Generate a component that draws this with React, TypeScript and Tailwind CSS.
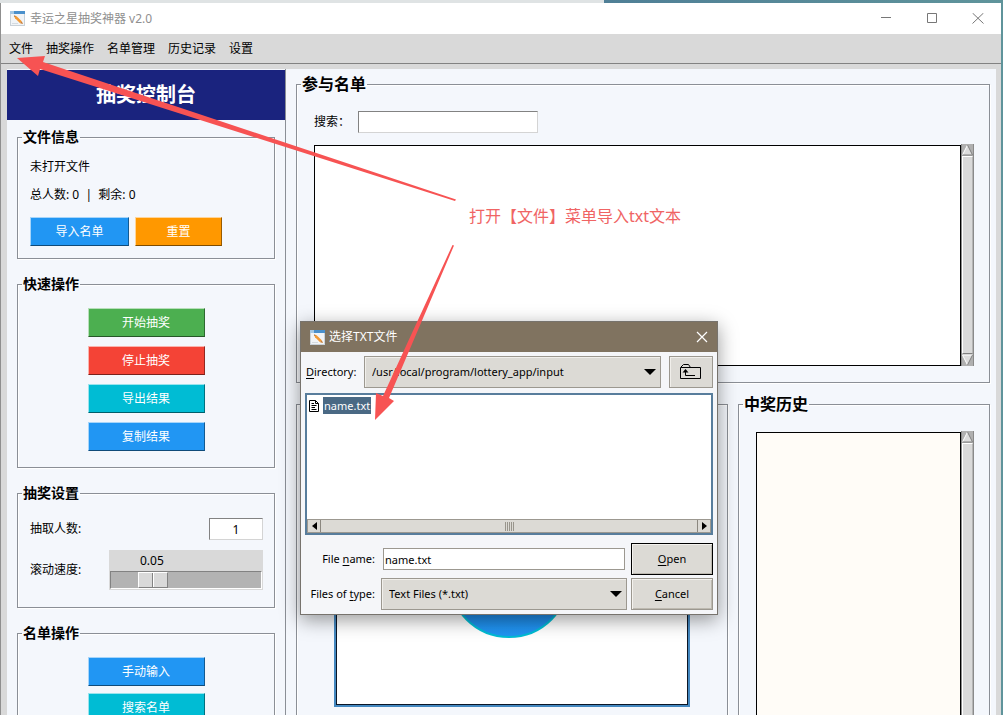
import { useState } from "react";
import type { ReactNode } from "react";

const NOTE_COLOR = "#f75353";

function AppIcon() {
  return (
    <svg width="15" height="15" viewBox="0 0 15 15" aria-hidden="true" className="shrink-0">
      <rect x="0.5" y="0.5" width="14" height="14" fill="#f1f4f7" stroke="#c9d1d8" />
      <rect x="0" y="0" width="15" height="3" fill="#4a90cc" />
      <rect x="0" y="0" width="4" height="3" fill="#a5c8e4" />
      <path d="M2 12.5h6" stroke="#d5dbe0" />
      <path d="M4 4.6l2.6.7 5.2 5-1.7 1.9L5 7.200z" fill="#f39a35" />
      <path d="M10.100 12.200l1.700-1.900 1.200 2.700z" fill="#c47a35" />
      <path d="M4 4.600l1.600.4-.9 1z" fill="#8a5a2c" />
    </svg>
  );
}

function Group({ title, large, className, children }: { title: string; large?: boolean; className: string; children: ReactNode }) {
  return (
    <fieldset className={"min-w-0 border border-[#8b8f96] shadow-[1px_1px_0_#fff,inset_1px_1px_0_#fff] " + className}>
      <legend className={"ml-1 h-5 px-px font-bold leading-5 " + (large ? "text-[16px]" : "text-[14px]")}>{title}</legend>
      {children}
    </fieldset>
  );
}

function ActionButton({ className, children }: { className: string; children: ReactNode }) {
  return (
    <button
      type="button"
      className={"h-[29px] border border-t-white/60 border-l-white/60 border-r-black/40 border-b-black/50 text-[12px] text-white " + className}
    >
      {children}
    </button>
  );
}

function ScrollBar({ bottom }: { bottom?: boolean }) {
  return (
    <div className="flex w-[13px] shrink-0 flex-col border-x border-[#8a8a8a] bg-[#c9c9c9]">
      <svg viewBox="0 0 11 12" className="h-3 w-full shrink-0 bg-[#b0b0b0]" aria-hidden="true">
        <path d="M5.5 1L10.5 11H0.5z" fill="#dcdcdc" />
        <path d="M5.5 1L0.5 11" stroke="#fff" />
        <path d="M5.5 1L10.5 11H0.5" stroke="#808080" fill="none" />
      </svg>
      <div className="min-h-0 flex-1 border border-t-white border-r-[#b5b5b5] border-b-[#808080] border-l-white bg-[#d9d9d9]" />
      {bottom && (
        <svg viewBox="0 0 11 12" className="h-3 w-full shrink-0 bg-[#b0b0b0]" aria-hidden="true">
          <path d="M5.5 11L10.5 1H0.5z" fill="#dcdcdc" />
          <path d="M5.5 11L0.5 1H10.5" stroke="#fff" fill="none" />
          <path d="M5.5 11L10.5 1" stroke="#808080" />
        </svg>
      )}
    </div>
  );
}

function DropDown({ id, value, className }: { id: string; value: string; className: string }) {
  return (
    <div className={"relative h-8 " + className}>
      <select id={id} className="h-full w-full appearance-none border border-[#9c9890] bg-[#dcdad5] px-[7px] text-[11px] shadow-[inset_1px_1px_0_#f1efeb]">
        <option>{value}</option>
      </select>
      <svg viewBox="0 0 12 6" className="pointer-events-none absolute top-[13px] right-[5px] h-[6px] w-3" aria-hidden="true">
        <path d="M0 0H12L6 6z" />
      </svg>
    </div>
  );
}

const DIALOG_BUTTON = "h-8 w-[82px] border bg-[#dcdad5] text-[11px] shadow-[inset_1px_1px_0_#f4f2ee,inset_-1px_-1px_0_#bdb9b0]";

function FileDialog() {
  const [fileName, setFileName] = useState("name.txt");
  return (
    <div
      role="dialog"
      aria-label="选择TXT文件"
      className="absolute top-[321px] left-[300px] w-[418px] border border-[#77736d] bg-[#f5f6f9] shadow-[0_5px_18px_rgba(0,0,0,0.4)]"
    >
      <div className="flex h-[30px] items-center gap-1 bg-[#807360] pr-[9px] pl-[9px] text-[12px] text-white">
        <AppIcon />
        <span className="flex-1">选择TXT文件</span>
        <button type="button" aria-label="关闭">
          <svg width="12" height="12" viewBox="0 0 12 12" stroke="#fff" strokeWidth="1.2" aria-hidden="true">
            <path d="M1 1L11 11M11 1L1 11" />
          </svg>
        </button>
      </div>

      <div className="flex flex-col p-1 text-[11px]">
        <div className="flex items-center">
          <label htmlFor="directory" className="w-[59px] shrink-0 pl-px">
            <u className="underline-offset-2">D</u>irectory:
          </label>
          <DropDown id="directory" value="/usr/local/program/lottery_app/input" className="flex-1" />
          <button
            type="button"
            aria-label="上级目录"
            className="ml-2 flex h-8 w-11 items-center justify-center border border-[#9c9890] bg-[#dcdad5] shadow-[inset_1px_1px_0_#f1efeb]"
          >
            <svg width="22" height="16" viewBox="0 0 22 16" fill="none" stroke="#000" aria-hidden="true">
              <path d="M0.5 3.5V14.5H20.5V3.5H10.5L8.5 0.5H3.5L0.5 3.5" />
              <path d="M1 3.5H11" />
              <path d="M5.5 6V11.5H15" />
              <path d="M2.5 8.5L5.5 5L8.5 8.5z" fill="#000" stroke="none" />
            </svg>
          </button>
        </div>

        <div className="mt-[5px] flex h-[142px] flex-col justify-between border-2 border-[#587d9c] bg-white">
          <div className="flex items-center pt-[2px] pl-[2px]">
            <svg width="10" height="12" viewBox="0 0 10 12" fill="none" stroke="#000" aria-hidden="true">
              <path d="M0.5 0.5H6.5L9.5 3.5V11.5H0.5z" />
              <path d="M6.5 0.5V3.5H9.5M2.5 3.5H5M2.5 5.5H7.5M2.5 7.5H6M2.5 9.5H7.5" />
            </svg>
            <button type="button" className="ml-1 h-[17px] bg-[#4a6984] px-px leading-[17px] text-white">
              name.txt
            </button>
          </div>
          <div className="flex h-[14px] border border-[#9c9890] bg-[#dcdad5]">
            <button type="button" aria-label="向左滚动" className="flex w-[13px] items-center justify-center border-r border-[#8b877f]">
              <svg width="5" height="8" viewBox="0 0 5 8" aria-hidden="true"><path d="M5 0V8L0 4z" /></svg>
            </button>
            <div className="flex flex-1 items-center justify-center gap-px">
              <i className="h-[9px] w-px bg-[#99958c]" />
              <i className="h-[9px] w-px bg-[#99958c]" />
              <i className="h-[9px] w-px bg-[#99958c]" />
              <i className="h-[9px] w-px bg-[#99958c]" />
              <i className="h-[9px] w-px bg-[#99958c]" />
            </div>
            <button type="button" aria-label="向右滚动" className="flex w-[13px] items-center justify-center border-l border-[#8b877f]">
              <svg width="5" height="8" viewBox="0 0 5 8" aria-hidden="true"><path d="M0 0V8L5 4z" /></svg>
            </button>
          </div>
        </div>

        <div className="mt-2 flex items-center">
          <label htmlFor="file-name" className="w-[70px] shrink-0 text-right">
            File <u className="underline-offset-2">n</u>ame:
          </label>
          <input
            id="file-name"
            value={fileName}
            onChange={(e) => setFileName(e.target.value)}
            className="mr-[6px] ml-2 h-[22px] min-w-0 flex-1 border border-[#9c9890] bg-white px-px"
          />
          <button type="button" className={DIALOG_BUTTON + " border-black"}>
            <u className="underline-offset-2">O</u>pen
          </button>
        </div>
        <div className="mt-[3px] flex items-center">
          <label htmlFor="file-type" className="w-[70px] shrink-0 text-right">
            Files of <u className="underline-offset-2">t</u>ype:
          </label>
          <DropDown id="file-type" value="Text Files (*.txt)" className="mr-1 ml-[6px] flex-1" />
          <button type="button" className={DIALOG_BUTTON + " border-[#9c9890]"}>
            <u className="underline-offset-2">C</u>ancel
          </button>
        </div>
      </div>
    </div>
  );
}

function ControlPanel() {
  const [speed, setSpeed] = useState(0.05);
  return (
    <aside className="w-[279px] shrink-0 overflow-hidden border-r border-[#8b8f96] pt-px">
      <h1 className="flex h-[50px] items-center justify-center bg-[#1a237e] text-[20px] font-bold text-white">抽奖控制台</h1>
      <div className="flex flex-col gap-[15px] px-[10px] pt-[7px]">
        <Group title="文件信息" className="h-[132px]">
          <div className="px-3 pt-[10px] text-[12px] leading-5">
            <p>未打开文件</p>
            <p className="mt-[8px]">总人数: 0 &nbsp;|&nbsp; 剩余: 0</p>
            <div className="mt-[12px] flex gap-[6px]">
              <ActionButton className="w-[99px] bg-[#2196f3]">导入名单</ActionButton>
              <ActionButton className="w-[87px] bg-[#ff9800]">重置</ActionButton>
            </div>
          </div>
        </Group>

        <Group title="快速操作" className="h-[194px]">
          <div className="flex flex-col items-center gap-[9px] pt-[14px]">
            <ActionButton className="w-[117px] bg-[#4caf50]">开始抽奖</ActionButton>
            <ActionButton className="w-[117px] bg-[#f44336]">停止抽奖</ActionButton>
            <ActionButton className="w-[117px] bg-[#00bcd4]">导出结果</ActionButton>
            <ActionButton className="w-[117px] bg-[#2196f3]">复制结果</ActionButton>
          </div>
        </Group>

        <Group title="抽奖设置" className="h-[125px]">
          <div className="flex flex-col gap-[10px] pt-[15px] pr-[11px] pl-3 text-[12px]">
            <div className="flex items-center justify-between">
              <label htmlFor="draw-count">抽取人数:</label>
              <input
                id="draw-count"
                defaultValue="1"
                className="h-[22px] w-[54px] border border-t-[#828282] border-r-[#d4d4d4] border-b-[#d4d4d4] border-l-[#828282] bg-white text-center text-[12px]"
              />
            </div>
            <div className="flex items-center justify-between">
              <label htmlFor="speed">滚动速度:</label>
              <div className="h-10 w-[154px] bg-[#d9d9d9] px-px">
                <output htmlFor="speed" className="block h-[21px] pl-[30px] text-[12px] leading-[22px]">
                  {speed.toFixed(2)}
                </output>
                <input
                  id="speed"
                  type="range"
                  min="0.01"
                  max="0.19"
                  step="0.01"
                  value={speed}
                  onChange={(e) => setSpeed(Number(e.target.value))}
                  className="block h-[18px] w-full appearance-none border border-t-[#828282] border-r-white border-b-white border-l-[#828282] bg-[#b3b3b3] [&::-webkit-slider-thumb]:h-4 [&::-webkit-slider-thumb]:w-[30px] [&::-webkit-slider-thumb]:appearance-none [&::-webkit-slider-thumb]:border [&::-webkit-slider-thumb]:border-t-white [&::-webkit-slider-thumb]:border-l-white [&::-webkit-slider-thumb]:border-r-[#828282] [&::-webkit-slider-thumb]:border-b-[#828282] [&::-webkit-slider-thumb]:bg-[linear-gradient(90deg,#d9d9d9_13px,#828282_13px,#828282_14px,#fff_14px,#fff_15px,#d9d9d9_15px)]"
                />
              </div>
            </div>
          </div>
        </Group>

        <Group title="名单操作" className="h-[200px] shrink-0">
          <div className="flex flex-col items-center gap-[7px] pt-[14px]">
            <ActionButton className="w-[117px] bg-[#2196f3]">手动输入</ActionButton>
            <ActionButton className="w-[117px] bg-[#00bcd4]">搜索名单</ActionButton>
          </div>
        </Group>
      </div>
    </aside>
  );
}

function Workspace() {
  return (
    <section className="flex min-w-0 flex-1 flex-col pt-[5px] pr-[6px] pl-[10px]">
      <Group title="参与名单" large className="h-[309px] shrink-0">
        <div className="flex flex-col pt-[17px] pr-[15px] pl-[17px]">
          <div className="flex items-center text-[12px]">
            <label htmlFor="search" className="w-11 shrink-0">搜索：</label>
            <input
              id="search"
              className="h-[22px] w-[180px] border border-t-[#828282] border-r-[#d4d4d4] border-b-[#d4d4d4] border-l-[#828282] bg-white px-1"
            />
          </div>
          <div className="mt-[11px] flex h-[222px]">
            <div role="listbox" aria-label="参与名单" className="mt-px flex-1 border border-black bg-white" />
            <ScrollBar bottom />
          </div>
        </div>
      </Group>

      <div className="mt-[11px] flex h-[420px] shrink-0 gap-[10px]">
        <div className="mt-[10px] flex min-w-0 flex-1 justify-center border border-[#8b8f96] pt-[42px] shadow-[1px_1px_0_#fff,inset_1px_1px_0_#fff]">
          <svg width="356" height="260" viewBox="0 0 356 260" role="img" aria-label="转盘" className="shrink-0">
            <defs>
              <linearGradient id="wheel" x1="0" y1="0" x2="0" y2="1">
                <stop offset="0.5" stopColor="#1976d2" />
                <stop offset="1" stopColor="#2196f3" />
              </linearGradient>
            </defs>
            <rect width="356" height="260" fill="#4488c0" />
            <rect x="2.5" y="2.5" width="351" height="255" fill="#fff" stroke="#0b1626" />
            <circle cx="175" cy="130" r="60" fill="url(#wheel)" stroke="#00bcd4" strokeWidth="2" />
          </svg>
        </div>
        <Group title="中奖历史" large className="w-[252px] shrink-0">
          <div className="flex h-[380px] pt-[17px] pr-[15px] pl-[17px]">
            <textarea readOnly aria-label="中奖历史" className="mt-px min-w-0 flex-1 resize-none border border-black bg-[#fffcf7]" />
            <ScrollBar />
          </div>
        </Group>
      </div>
    </section>
  );
}

function Annotations() {
  return (
    <>
      <p className="pointer-events-none absolute top-[204px] left-[469px] text-[16px] leading-6 whitespace-nowrap text-[#f06464]">
        打开【文件】菜单导入txt文本
      </p>
      <svg width="480" height="440" viewBox="0 0 480 440" fill={NOTE_COLOR} className="pointer-events-none absolute top-0 left-0" aria-hidden="true">
        <path d="M17 58L45 56L43 62L456 199.500L455 201L40 69L38 76z" />
        <path d="M375 420L376 393L383 396L452.500 245L454 245.500L389 398L394 401z" />
      </svg>
    </>
  );
}

export default function App() {
  return (
    <div className="relative flex h-screen flex-col overflow-hidden bg-[linear-gradient(90deg,#dfe3e4_604px,#4f7f96_604px,#5f949b)] pt-[3px] pr-[2px] font-['Noto_Sans','Noto_Sans_CJK_SC',sans-serif] text-black">
      <div className="flex min-h-0 flex-1 flex-col border-l border-[#8f8f8f] bg-[#d9d9d9]">
        <header className="flex h-[31px] shrink-0 items-center bg-white pr-[17px] pl-[9px] text-[12px] text-[#8f8f8f]">
          <AppIcon />
          <span className="ml-[5px] flex-1">幸运之星抽奖神器 v2.0</span>
          <div className="flex gap-[34px] text-[#777]">
            <button type="button" aria-label="最小化">
              <svg width="12" height="12" viewBox="0 0 12 12" stroke="currentColor" aria-hidden="true"><path d="M1 4.500H11" /></svg>
            </button>
            <button type="button" aria-label="最大化">
              <svg width="12" height="12" viewBox="0 0 12 12" fill="none" stroke="currentColor" aria-hidden="true"><path d="M1.500 0.500H10.500V9.500H1.500z" /></svg>
            </button>
            <button type="button" aria-label="关闭">
              <svg width="12" height="12" viewBox="0 0 12 12" stroke="currentColor" aria-hidden="true"><path d="M0.500 0L11.500 10.500M11.500 0L0.500 10.500" /></svg>
            </button>
          </div>
        </header>
        <nav className="flex h-[30px] shrink-0 items-center gap-[13px] border-b border-[#828282] pl-2 text-[12px]">
          <button type="button">文件</button>
          <button type="button">抽奖操作</button>
          <button type="button">名单管理</button>
          <button type="button">历史记录</button>
          <button type="button">设置</button>
        </nav>
        <main className="flex min-h-0 flex-1 overflow-hidden pt-[5px] pr-[5px] pl-[6px]">
          <div className="flex min-w-0 flex-1 bg-[#f4f7fc]">
            <ControlPanel />
            <Workspace />
          </div>
        </main>
      </div>
      <FileDialog />
      <Annotations />
    </div>
  );
}
